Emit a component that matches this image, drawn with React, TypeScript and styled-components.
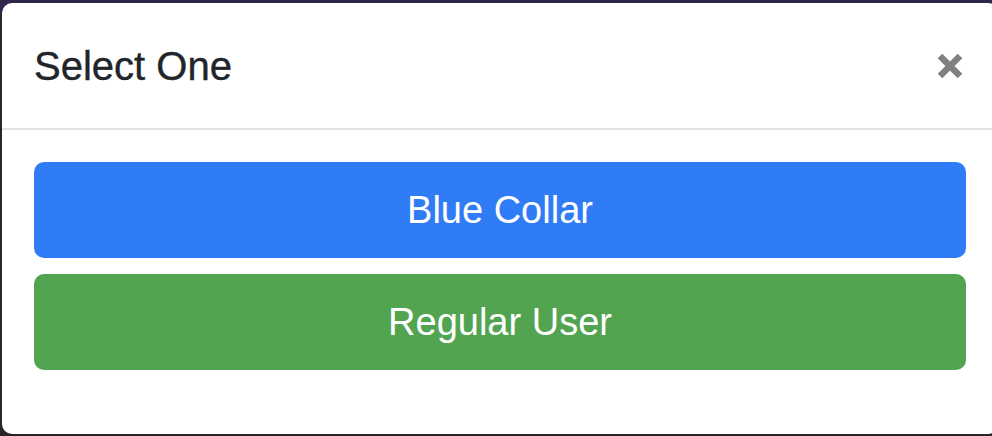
import React from "react";
import styled, { createGlobalStyle } from "styled-components";

const GlobalStyle = createGlobalStyle`
  html, body { margin: 0; padding: 0; }
  body {
    font-family: "Liberation Sans", Arial, Helvetica, sans-serif;
    background: #262224;
    overflow: hidden;
  }
`;

const Backdrop = styled.div`
  width: 992px;
  height: 436px;
  box-sizing: border-box;
  padding: 3px 0 2px 2px;
  overflow: hidden;
  background: linear-gradient(#2f254d 0, #2f254d 14px, #2a2527 14px, #2a2527 100%);
`;

const Modal = styled.div`
  width: 996px;
  height: 431px;
  box-sizing: border-box;
  background: #ffffff;
  border-radius: 10px;
  display: flex;
  flex-direction: column;
`;

const Header = styled.div`
  display: flex;
  align-items: center;
  justify-content: space-between;
  padding: 33px 34px 32px 32px;
  border-bottom: 2px solid #dee2e6;
`;

const Title = styled.h5`
  margin: 0;
  font-size: 40px;
  line-height: 60px;
  font-weight: 400;
  color: #212529;
  -webkit-text-stroke: 0.4px #212529;
`;

const Close = styled.button`
  background: none;
  border: 0;
  padding: 0;
  width: 28px;
  height: 28px;
  display: flex;
  align-items: center;
  justify-content: center;
  cursor: pointer;
`;

const Body = styled.div`
  padding: 32px;
  display: flex;
  flex-direction: column;
  gap: 16px;
`;

const Button = styled.button<{ $bg: string }>`
  display: flex;
  align-items: center;
  justify-content: center;
  width: 100%;
  height: 96px;
  border: 0;
  border-radius: 10px;
  background: ${(p) => p.$bg};
  color: #ffffff;
  font-family: "Liberation Sans", Arial, Helvetica, sans-serif;
  font-size: 38px;
  font-weight: 400;
  cursor: pointer;
`;

export default function App() {
  return (
    <>
      <GlobalStyle />
      <Backdrop>
        <Modal>
          <Header>
            <Title>Select One</Title>
            <Close aria-label="Close">
              <svg width="28" height="28" viewBox="0 0 28 28">
                <path d="M4 4 L24 24 M24 4 L4 24" stroke="#808080" strokeWidth="6.5" strokeLinecap="butt" />
              </svg>
            </Close>
          </Header>
          <Body>
            <Button $bg="#307cf6">Blue Collar</Button>
            <Button $bg="#52a451">Regular User</Button>
          </Body>
        </Modal>
      </Backdrop>
    </>
  );
}
